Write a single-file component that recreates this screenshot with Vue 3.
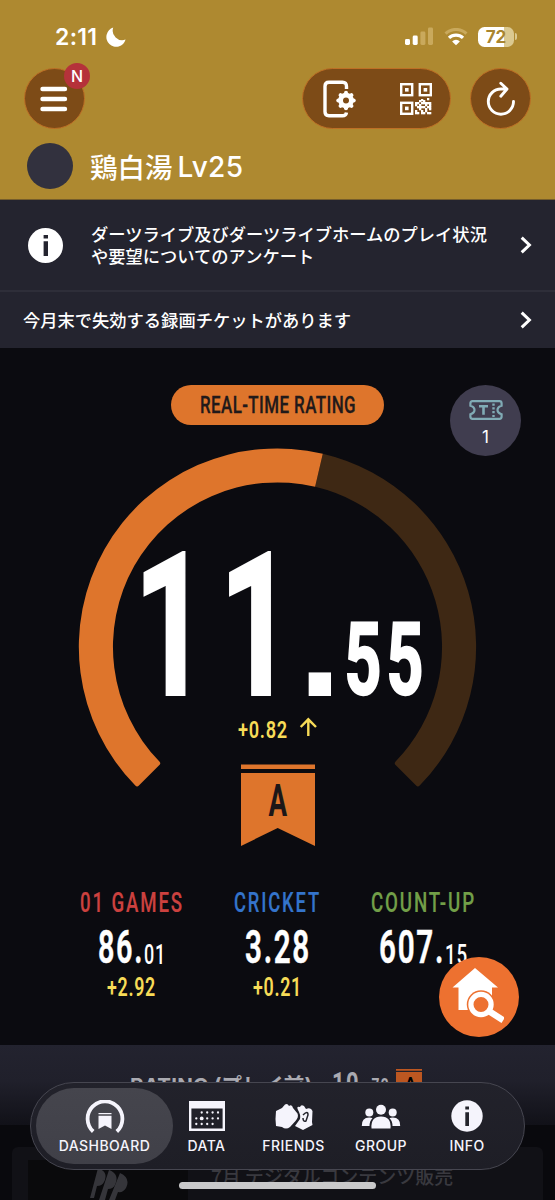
<script setup>
import { h } from 'vue'

// Condensed display lettering: text fitted to a fixed width, sitting on its baseline.
const Din = (p) =>
  h('svg', { width: p.w, height: p.s * 0.711, overflow: 'visible', style: { display: 'block', overflow: 'visible' } }, [
    h('text', {
      x: 0,
      y: p.s * 0.711,
      textLength: p.w,
      lengthAdjust: 'spacingAndGlyphs',
      fill: 'currentColor',
      stroke: 'currentColor',
      'stroke-width': p.k || 0,
      'font-family': 'Roboto, sans-serif',
      'font-size': p.s,
      'font-weight': p.b || 500,
      'letter-spacing': p.g || 0
    }, p.t)
  ])
Din.props = ['t', 'w', 's', 'b', 'g', 'k']

const stats = [
  { name: '01 GAMES', nw: 104, cls: 'red', big: '86.', bw: 46, small: '01', sw: 22, diff: '+2.92', dw: 49 },
  { name: 'CRICKET', nw: 87, cls: 'blue', big: '3.28', bw: 66, small: '', sw: 0, diff: '+0.21', dw: 49 },
  { name: 'COUNT-UP', nw: 105, cls: 'green', big: '607.', bw: 66, small: '15', sw: 23, diff: '', dw: 0 }
]

const gear = [0, 45, 90, 135, 180, 225, 270, 315]
const qr = [
  [15, 19], [17, 19], [21, 19], [27, 19], [19, 21], [23, 17], [25, 21], [29, 21], [15, 21], [17, 23], [21, 23], [23, 23],
  [27, 23], [25, 25], [29, 25], [19, 25], [15, 27], [17, 29], [21, 27], [23, 29], [27, 29], [21, 29], [29, 23], [23, 19],
  [19, 17], [27, 15], [25, 19], [29, 29], [15, 29], [25, 27], [19, 23], [29, 19], [21, 16]
]
const dots = [
  [12.7, 12.5], [18.2, 12.5], [23.6, 12.5], [29, 12.5],
  [7.3, 18.4], [18.2, 18.4], [23.6, 18.4], [29, 18.4],
  [7.3, 24], [12.7, 24], [18.2, 24], [23.6, 24]
]
</script>

<template>
  <div class="screen">
    <header class="top">
      <div class="status">
        <span class="time">2:11</span>
        <svg class="moon" width="20" height="20" viewBox="0 0 20 20"><path d="M7.2.6A9.8 9.8 0 1 0 19.6 12.6 9.6 9.6 0 0 1 7.2.6Z" fill="#fff" /></svg>
        <svg class="signal" width="29" height="19" viewBox="0 0 29 19">
          <rect x="0" y="12" width="5" height="6" rx="1.4" fill="#fff" />
          <rect x="7.7" y="8.5" width="5" height="9.5" rx="1.4" fill="#fff" />
          <rect x="15.4" y="4.5" width="5" height="13.5" rx="1.4" fill="#c9a95c" />
          <rect x="23" y="0.5" width="5" height="17.5" rx="1.4" fill="#c9a95c" />
        </svg>
        <svg class="wifi" width="24" height="18" viewBox="0 0 24 18" fill="none">
          <path d="M1.6 5.7A15 15 0 0 1 22.4 5.7" stroke="#c9a95c" stroke-width="3.2" />
          <path d="M5 9.9A10.3 10.3 0 0 1 19 9.9" stroke="#fff" stroke-width="3.3" />
          <path d="M8.1 13.4A5.6 5.6 0 0 1 15.9 13.4L12 17.2Z" fill="#fff" />
        </svg>
        <div class="battery"><span>72</span></div>
        <i class="nub"></i>
      </div>

      <div class="tools">
        <div class="round menu">
          <svg width="28" height="26" viewBox="0 0 28 26" stroke="#fff" stroke-width="4.4" stroke-linecap="round"><path d="M2.5 3H25M2.5 13H25M2.5 23H25" /></svg>
          <span class="badge">N</span>
        </div>
        <div class="capsule">
          <svg width="34" height="38" viewBox="0 0 34 38" fill="none">
            <path d="M23.5 9V6.5Q23.5 2.2 19.5 2.2H6Q2 2.2 2 6.2V31.8Q2 35.8 6 35.8H19.5Q23 35.8 23.5 32.5" stroke="#fff" stroke-width="3.4" />
            <circle cx="23" cy="20.5" r="5.4" stroke="#fff" stroke-width="4.8" />
            <path v-for="a in gear" :key="a" d="M23 12.8V15" stroke="#fff" stroke-width="4" stroke-linecap="round" :transform="`rotate(${a} 23 20.5)`" />
          </svg>
          <svg class="qr" width="32" height="32" viewBox="0 0 32 32">
            <g fill="none" stroke="#fff" stroke-width="2.4">
              <rect x="1.2" y="1.2" width="11" height="11" /><rect x="19.8" y="1.2" width="11" height="11" /><rect x="1.2" y="19.8" width="11" height="11" />
            </g>
            <g fill="#fff">
              <rect x="5" y="5" width="3.6" height="3.6" /><rect x="23.6" y="5" width="3.6" height="3.6" /><rect x="5" y="23.6" width="3.6" height="3.6" />
              <rect v-for="(q, i) in qr" :key="i" :x="q[0]" :y="q[1]" width="2.3" height="2.3" />
            </g>
          </svg>
        </div>
        <div class="round reload">
          <svg width="30" height="36" viewBox="0 0 30 36" fill="none" stroke="#fff" stroke-width="2.9" stroke-linecap="round" stroke-linejoin="round">
            <path d="M27.5 20.5A12.6 12.6 0 1 1 15 8H20.5M14.8 2.2L21 8L14.8 15.2" />
          </svg>
        </div>
      </div>

      <div class="user">
        <i class="avatar"></i>
        <span class="kanji">鶏白湯</span><span class="lv">Lv25</span>
      </div>
    </header>

    <section class="notice first">
      <svg class="info" width="35" height="35" viewBox="0 0 35 35">
        <circle cx="17.5" cy="17.5" r="17.5" fill="#fff" />
        <path d="M15.6 7H20V10.5H15.6ZM15.6 13.2H20V28H15.6Z" fill="#24242f" />
      </svg>
      <p>ダーツライブ及びダーツライブホームのプレイ状況<br />や要望についてのアンケート</p>
      <svg class="chev" width="12" height="18" viewBox="0 0 12 18"><path d="M1.7 1.7L9.4 9L1.7 16.3" fill="none" stroke="#fff" stroke-width="3" /></svg>
    </section>
    <section class="notice second">
      <p>今月末で失効する録画チケットがあります</p>
      <svg class="chev" width="12" height="18" viewBox="0 0 12 18"><path d="M1.7 1.7L9.4 9L1.7 16.3" fill="none" stroke="#fff" stroke-width="3" /></svg>
    </section>

    <main class="board">
      <div class="pill"><Din t="REAL-TIME RATING" :w="156" :s="24.5" :g="0.6" :k="0.3" /></div>
      <div class="ticket">
        <svg width="34" height="20" viewBox="0 0 34 20" fill="none" stroke="#80abb5">
          <path d="M3.5 1.2H30.5Q32.6 1.2 32.6 3.5V5.8Q28.5 7 28.5 10T32.6 14.2V16.5Q32.6 18.8 30.5 18.8H3.5Q1.4 18.8 1.4 16.5V14.2Q5.5 13 5.5 10T1.4 5.8V3.5Q1.4 1.2 3.5 1.2Z" stroke-width="2.2" />
          <path d="M10 6.2H19M14.5 6.2V14.8" stroke-width="2.6" />
          <path d="M24.5 3.5V17" stroke-width="2.4" stroke-dasharray="2.2 1.6" />
        </svg>
        <span>1</span>
      </div>

      <svg class="dial" width="555" height="421" viewBox="0 440 555 421">
        <path fill="#3e2814" d="M322.8 453.7A198.5 198.5 0 0 1 419.7 785.6Q417.9 787.4 416.1 785.6L395.6 765.1Q393.8 763.3 395.6 761.5A164.5 164.5 0 0 0 315.1 486.8Z" />
        <path fill="#de752c" d="M135.3 785.6A198.5 198.5 0 0 1 322.8 453.7L315.1 486.8A164.5 164.5 0 0 0 159.4 761.5Q161.2 763.3 159.4 765.1L138.9 785.6Q137.1 787.4 135.3 785.6Z" />
        <g fill="#fff" font-weight="700">
          <text class="din" x="133.5" y="694.5" font-size="200" stroke="#fff" stroke-width="2" textLength="171" lengthAdjust="spacingAndGlyphs" letter-spacing="16">11</text>
          <text class="dot" x="298" y="695.5" font-size="158">.</text>
          <text class="din" x="344.5" y="694.3" font-size="100" stroke="#fff" stroke-width="2.4" textLength="84" lengthAdjust="spacingAndGlyphs" letter-spacing="8">55</text>
        </g>
        <text class="din" x="238" y="737.5" font-size="24.5" font-weight="600" fill="#f7db57" textLength="50" lengthAdjust="spacingAndGlyphs" letter-spacing="1">+0.82</text>
        <path d="M308.3 736V719.5M300.7 727L308.3 719.3L316 727" fill="none" stroke="#f7db57" stroke-width="2.4" />
        <path fill="#de752c" d="M241 764.6H315V769H241ZM241 773H315V846L277.7 828L241 846Z" />
        <text class="din" x="268.6" y="815.5" font-size="44" font-weight="700" fill="#1c1718" textLength="18.6" lengthAdjust="spacingAndGlyphs">A</text>
      </svg>

      <div class="stats">
        <div v-for="s in stats" :key="s.name" class="stat">
          <Din :class="s.cls" :t="s.name" :w="s.nw" :s="28" :g="2.8" :k="0.2" />
          <div class="value">
            <Din :t="s.big" :w="s.bw" :s="45.5" :g="2.6" :b="600" :k="0.5" />
            <Din v-if="s.small" :t="s.small" :w="s.sw" :s="27.5" :g="1.2" />
          </div>
          <Din v-if="s.diff" class="diff" :t="s.diff" :w="s.dw" :s="25" :g="1" :b="600" />
        </div>
      </div>

      <div class="fab">
        <svg width="52" height="56" viewBox="0 0 52 56">
          <path d="M23 1L46 20.5H40V43H6.5V20.5H.5Z" fill="#fff" />
          <circle cx="29" cy="37.5" r="14.2" fill="#ed7130" />
          <path d="M36 43.5L48.5 51.5" stroke="#fff" stroke-width="6.5" stroke-linecap="square" />
          <circle cx="29" cy="37.5" r="10.1" fill="#ed7130" stroke="#fff" stroke-width="5.2" />
        </svg>
      </div>
    </main>

    <section class="previous">
      <b>RATING (プレイ前)</b>
      <div class="old"><Din t="10" :w="28" :s="30" :g="2" :b="700" /><Din t=".73" :w="24" :s="20" :g="2" :b="700" /></div>
      <svg width="27" height="34" viewBox="0 0 27 34"><path d="M0 0H26V1.8H0ZM0 3H26V31L13 25L0 31Z" fill="#bd5721" /><text class="din" x="9" y="20" font-size="16" font-weight="700" textLength="8">A</text></svg>
    </section>
    <section class="news">
      <div class="card">
        <div class="thumb">
          <svg width="40" height="32" viewBox="0 0 40 32" fill="#35353a">
            <path d="M8 0Q19 4 14 14Q12 18 7 18L4 30H0Z" /><path d="M19 2Q30 6 25 17Q23 21 18 21L15 32H9Z" /><path d="M30 5Q41 10 36 20Q33 25 28 24L25 32H19Z" />
          </svg>
        </div>
        <p>7月 デジタルコンテンツ販売</p>
      </div>
    </section>

    <nav class="bar">
      <div class="tab active">
        <svg width="40" height="34" viewBox="0 0 40 34">
          <path d="M8.2 31.5A17.4 17.4 0 1 1 31.8 31.5" fill="none" stroke="#f5f4fc" stroke-width="3.8" />
          <path d="M13.5 13H26.5V14.2H13.5ZM13.5 15.8H26.5V29L20 25.6L13.5 29Z" fill="#f5f4fc" />
        </svg>
        <span>DASHBOARD</span>
      </div>
      <div class="tab data">
        <svg width="36" height="34" viewBox="0 0 36 34">
          <path d="M1.2 2.2H34.8V29.8H1.2Z" fill="none" stroke="#f5f4fc" stroke-width="2.4" />
          <path d="M0 1H36V8.5H0Z" fill="#f5f4fc" />
          <g fill="#f5f4fc">
            <circle v-for="(d, i) in dots" :key="i" :cx="d[0]" :cy="d[1]" r="1.15" />
            <circle cx="12.7" cy="18.4" r="1.9" />
          </g>
        </svg>
        <span>DATA</span>
      </div>
      <div class="tab friends">
        <svg width="40" height="34" viewBox="0 0 40 34">
          <path d="M2 11L8 8L11 4.5Q13.5 3 15 6Q18 4 19 8L23.5 13.5Q25 17 21.5 21L16 27Q12 30 8 27L2 26Q1 19 2 11Z" fill="#f5f4fc" />
          <path d="M24 10Q22 6 26 7Q27 4 30 6L32 9Q37 7 38.5 11L38 22L38.5 25L29 30L21 26L26 19Q27 15 24 10Z" fill="#f5f4fc" />
          <path d="M29 15Q34 10 34 15L32 21Q29 22 29 18" fill="none" stroke="#23232c" stroke-width="1.5" />
        </svg>
        <span>FRIENDS</span>
      </div>
      <div class="tab group">
        <svg width="40" height="34" viewBox="0 0 40 34" fill="#f5f4fc">
          <circle cx="20" cy="9.8" r="5" /><circle cx="8.3" cy="12.5" r="4" /><circle cx="31.7" cy="12.5" r="4" />
          <path d="M10.5 28.5Q9.5 16.5 20 16.5T29.5 28.5Z" /><path d="M.8 26Q.5 17.5 8.2 17.5Q10.5 17.5 11.5 18.2Q8.5 21 8.5 26Z" /><path d="M39.2 26Q39.5 17.5 31.8 17.5Q29.5 17.5 28.5 18.2Q31.5 21 31.5 26Z" />
        </svg>
        <span>GROUP</span>
      </div>
      <div class="tab inf">
        <svg width="32" height="34" viewBox="0 0 32 34"><circle cx="16" cy="16" r="15.7" fill="#f5f4fc" /><path d="M14.3 6.5H18V9.6H14.3ZM14.3 12.3H18V26H14.3Z" fill="#24242c" /></svg>
        <span>INFO</span>
      </div>
    </nav>
    <i class="home"></i>
  </div>
</template>

<style>
body { margin: 0; background: #0b0b10; }
</style>

<style scoped>
.screen { position: relative; width: 555px; height: 1200px; overflow: hidden; color: #fff; background: #0b0b10; font-family: Inter, "Noto Sans CJK JP", sans-serif; box-sizing: border-box; }
.screen * { box-sizing: border-box; }
p { margin: 0; }
.din { font-family: Roboto, sans-serif; }
.dot { font-family: "Liberation Sans", sans-serif; }
.top { height: 200px; background: #ae8930; border-bottom: 1px solid #755d2b; }
.status { display: flex; align-items: center; height: 68px; padding: 5px 0 0 55px; }
.time { font-size: 23px; font-weight: 600; line-height: 24px; width: 51px; letter-spacing: 0.3px; margin-top: 1px; }
.moon { margin-top: 1px; }
.signal { margin-left: 279px; }
.wifi { margin: 1px 0 0 10px; }
.battery { width: 36px; height: 20px; margin-left: 10px; border-radius: 6.5px; background: linear-gradient(90deg, #fff 72%, #dbc990 72%); display: flex; justify-content: center; color: #a9852f; font-size: 17px; font-weight: 700; line-height: 20px; }
.nub { width: 2px; height: 7px; margin-left: 1px; border-radius: 0 2px 2px 0; background: #dbc990; }
.tools { display: flex; padding-left: 24px; height: 61px; }
.round, .capsule { height: 61px; background: #7d4b17; border: 1px solid #bd6f25; display: flex; align-items: center; justify-content: center; }
.round { position: relative; width: 61px; border-radius: 50%; }
.menu svg { margin-right: 1px; }
.badge { position: absolute; left: 39px; top: -6px; width: 26px; height: 26px; border-radius: 50%; background: #b5323a; font-size: 16px; font-weight: 500; line-height: 26px; text-align: center; }
.capsule { width: 149px; margin-left: 217px; border-radius: 31px; padding-left: 1px; gap: 43px; }
.reload { margin-left: 19px; }
.user { display: flex; align-items: center; padding: 14px 0 0 27px; }
.avatar { width: 46px; height: 46px; border-radius: 50%; background: #32313e; }
.kanji { margin-left: 17px; font: 500 27.5px/40px "Noto Sans CJK JP", sans-serif; }
.lv { margin-left: 5px; font-size: 28px; font-weight: 500; line-height: 40px; letter-spacing: 0.3px; padding-top: 1px; }
.notice { display: flex; align-items: center; background: #24242f; font: 500 17.27px/22px "Noto Sans CJK JP", sans-serif; padding-right: 23px; }
.first { height: 92px; padding-left: 28px; border-bottom: 2px solid #2e2e39; }
.first p { margin-left: 28px; white-space: nowrap; }
.second { height: 56px; padding-left: 23px; }
.chev { margin-left: auto; }
.board { position: relative; height: 697px; padding-top: 37px; }
.pill { width: 213px; height: 40px; margin: 0 auto; border-radius: 20px; background: #de752c; color: #21191a; display: flex; align-items: center; justify-content: center; }
.ticket { position: absolute; left: 450px; top: 37px; width: 71px; height: 71px; border-radius: 50%; background: #403d4f; display: flex; flex-direction: column; align-items: center; padding-top: 15px; }
.ticket span { font-size: 17px; line-height: 20px; margin-top: 7px; }
.dial { display: block; margin-top: 15px; }
.stats { display: grid; grid-template-columns: repeat(3, 146px); justify-content: center; margin-top: 31px; }
.stat { display: flex; flex-direction: column; align-items: center; }
.value { display: flex; align-items: flex-end; margin: 19px 0 14.5px; }
.red { color: #cc413f; }
.blue { color: #3474cb; }
.green { color: #729f48; }
.diff { color: #f7db57; }
.fab { position: absolute; left: 439px; top: 609px; width: 80px; height: 80px; border-radius: 50%; background: #ed7130; display: flex; align-items: center; justify-content: center; }
.fab svg { margin: 0 3px 4px 0; }
.previous { height: 80px; display: flex; align-items: flex-start; padding: 24px 0 0 130px; background: linear-gradient(#23232f, #20202b 45%, #111118); color: #aaaab1; white-space: nowrap; }
.previous b { width: 202px; font-size: 20.5px; line-height: 30px; letter-spacing: 0.2px; margin-top: 2px; }
.old { display: flex; align-items: flex-end; width: 64px; gap: 6px; margin-top: 3px; }
.news { height: 75px; padding: 22px 12px 0; background: #09090d; }
.card { display: flex; height: 60px; padding: 13px 16px 0; border-radius: 6px 6px 0 0; background: #111116; }
.thumb { width: 160px; height: 50px; padding: 8px 0 0 62px; background: #0a0a0c; }
.card p { margin-left: 23px; color: #39393f; font: 500 19px/32px "Noto Sans CJK JP", sans-serif; white-space: nowrap; }
.bar { position: absolute; left: 30px; top: 1082px; width: 495px; height: 88px; display: flex; padding: 5px 5px; border: 1px solid #464650; border-radius: 44px; background: linear-gradient(#22222b, #1e1e26); }
.tab { display: flex; flex-direction: column; align-items: center; height: 76px; padding-top: 12px; color: #f5f4fc; font-size: 14px; font-weight: 500; }
.tab span { margin-top: 3px; line-height: 18px; letter-spacing: 0.45px; }
.active { width: 137px; border-radius: 38px; background: linear-gradient(#45454d, #404048); }
.data { width: 67px; }
.friends { width: 107px; }
.group { width: 68px; }
.inf { width: 104px; }
.home { position: absolute; left: 179px; top: 1182px; width: 197px; height: 7px; border-radius: 4px; background: #c9c9ca; }
</style>
